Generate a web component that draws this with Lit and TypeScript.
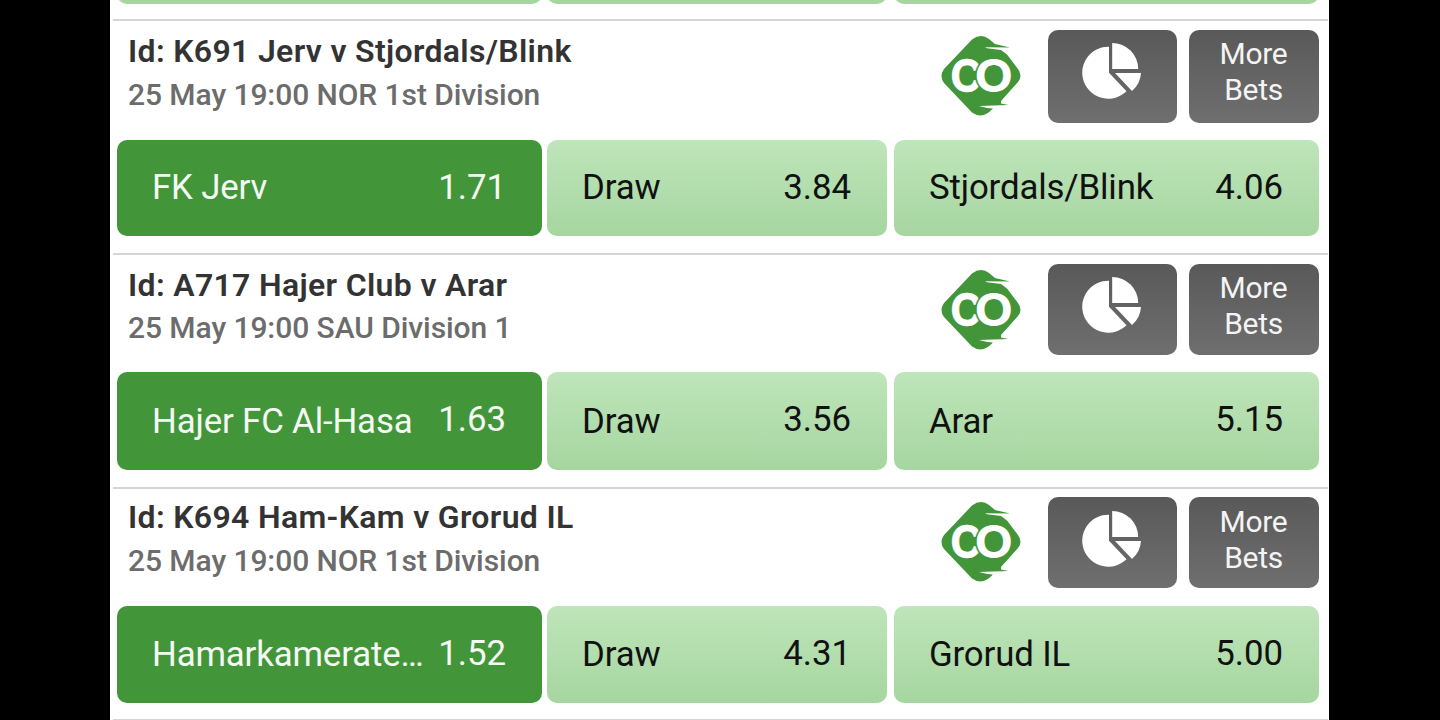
import { LitElement, html, css } from 'lit';
import { customElement, property } from 'lit/decorators.js';
import { classMap } from 'lit/directives/class-map.js';

interface Outcome {
  name: string;
  price: string;
  selected?: boolean;
}

interface Match {
  title: string;
  info: string;
  outcomes: Outcome[];
}

const MATCHES: Match[] = [
  {
    title: 'Id: K691 Jerv v Stjordals/Blink',
    info: '25 May 19:00 NOR 1st Division',
    outcomes: [
      { name: 'FK Jerv', price: '1.71', selected: true },
      { name: 'Draw', price: '3.84' },
      { name: 'Stjordals/Blink', price: '4.06' },
    ],
  },
  {
    title: 'Id: A717 Hajer Club v Arar',
    info: '25 May 19:00 SAU Division 1',
    outcomes: [
      { name: 'Hajer FC Al-Hasa', price: '1.63', selected: true },
      { name: 'Draw', price: '3.56' },
      { name: 'Arar', price: '5.15' },
    ],
  },
  {
    title: 'Id: K694 Ham-Kam v Grorud IL',
    info: '25 May 19:00 NOR 1st Division',
    outcomes: [
      { name: 'Hamarkamerate…', price: '1.52', selected: true },
      { name: 'Draw', price: '4.31' },
      { name: 'Grorud IL', price: '5.00' },
    ],
  },
];

@customElement('cash-out-badge')
export class CashOutBadge extends LitElement {
  static styles = css`
    :host {
      display: block;
      width: 80px;
      height: 80px;
    }

    svg {
      display: block;
    }

    .mark {
      font-family: Inter, sans-serif;
      font-size: 45px;
      font-weight: 700;
      fill: #fff;
      stroke: #fff;
      stroke-width: 0.6px;
    }

    .ring {
      stroke: #43953a;
      stroke-width: 3px;
      paint-order: stroke;
    }
  `;

  render() {
    return html`
      <svg width="80" height="80" viewBox="0 0 80 80">
        <path
          fill="#43953a"
          d="M31 3.5Q40-3 48 3L54 8L69 11.5L44 11.2L46 12.2L60 14L66 18.5L77 33Q82 40 77 46L60 65L60 67.5L67.5 69L38 70L46 72L52 72.6Q48 76.5 46 77.5Q39 82 31 76.5L3 47Q-2 40 3 33Z"
        />
        <text class="mark" x="9.2" y="56.4" textLength="32" lengthAdjust="spacingAndGlyphs">C</text>
        <text class="mark ring" x="33.5" y="56.4" textLength="38.5" lengthAdjust="spacingAndGlyphs">O</text>
      </svg>
    `;
  }
}

@customElement('match-row')
export class MatchRow extends LitElement {
  static styles = css`
    :host {
      display: block;
      box-sizing: border-box;
      height: var(--row-height);
      margin: 0 1px 0 3px;
      border-top: 2px solid #d5d5d5;
    }

    .header {
      display: flex;
      align-items: flex-start;
      height: var(--header-height);
      padding: 8.5px 9.5px 0 15px;
      box-sizing: border-box;
    }

    .text {
      flex: 1;
      margin-top: var(--text-top);
      white-space: nowrap;
    }

    .title {
      font-size: 32px;
      font-weight: 600;
      line-height: 44px;
      letter-spacing: 0.33px;
      color: #333;
    }

    .info {
      font-size: 30px;
      font-weight: 500;
      line-height: var(--info-line);
      letter-spacing: -0.07px;
      color: #6c6c6c;
    }

    cash-out-badge {
      margin: var(--badge-top) 27px 0 0;
    }

    .button {
      display: flex;
      align-items: flex-start;
      justify-content: center;
      box-sizing: border-box;
      width: 128.5px;
      height: var(--button-height);
      padding-top: 13.5px;
      border-radius: 10px;
      background: linear-gradient(#595959, #6f6f6f);
      color: #f4f4f4;
      font-size: 30px;
      line-height: 36px;
      text-align: center;
    }

    .button.more {
      width: 130px;
      margin-left: 12px;
      padding-top: var(--more-top);
      letter-spacing: -0.3px;
    }

    .outcomes {
      display: grid;
      grid-template-columns: 425px 340px 425px;
      column-gap: 5px;
      padding-left: 4px;
    }

    .outcome {
      display: flex;
      align-items: center;
      justify-content: space-between;
      height: var(--outcome-height);
      padding: 0 36px var(--name-lift) 35px;
      box-sizing: border-box;
      border-radius: 10px;
      background: linear-gradient(#bfe5ba, #a6d6a0);
      color: #111;
      font-size: 34.8px;
    }

    .outcome:last-child {
      margin-left: 2px;
      margin-right: -2px;
    }

    .outcome.selected {
      background: #43953a;
      color: #f4faf3;
    }

    .name {
      letter-spacing: -0.15px;
      white-space: nowrap;
    }

    .price {
      padding-bottom: var(--price-lift);
    }
  `;

  @property({ attribute: false }) match!: Match;

  render() {
    return html`
      <div class="header">
        <div class="text">
          <div class="title">${this.match.title}</div>
          <div class="info">${this.match.info}</div>
        </div>
        <cash-out-badge></cash-out-badge>
        <div class="button">
          <svg width="60" height="58" viewBox="0 0 60 58" fill="#fff">
            <path d="M27 3.7V29.7L44.5 48.2A26 26 0 1 1 27 3.7Z" />
            <path d="M30.2 0A26 26 0 0 1 56.2 26H30.2Z" />
            <path d="M33 30H59A26 26 0 0 1 50 48Z" />
          </svg>
        </div>
        <div class="button more">More<br />Bets</div>
      </div>
      <div class="outcomes">
        ${this.match.outcomes.map(
          (o) => html`
            <div class="outcome ${classMap({ selected: !!o.selected })}">
              <span class="name">${o.name}</span>
              <span class="price">${o.price}</span>
            </div>
          `
        )}
      </div>
    `;
  }
}

@customElement('app-root')
export class AppRoot extends LitElement {
  static styles = css`
    :host {
      display: flex;
      justify-content: center;
      height: 720px;
      overflow: hidden;
      background: #000;
      font-family: Roboto, sans-serif;
    }

    .panel {
      width: 1219px;
      height: 720px;
      margin-right: 1px;
      overflow: hidden;
      background: #fff;
    }

    /* bottom edge of the row scrolled off the top */
    .previous {
      display: grid;
      grid-template-columns: 425px 340px 425px;
      column-gap: 5px;
      height: 19px;
      padding-left: 7px;
    }

    .edge {
      height: 20px;
      margin-top: -16px;
      border-radius: 10px;
      background: #a6d6a0;
    }

    .edge:last-child {
      margin-left: 2px;
      margin-right: -2px;
    }

    match-row {
      --row-height: 233.6px;
      --header-height: 117px;
      --button-height: 91px;
      --outcome-height: 97.5px;
      --text-top: -1px;
      --info-line: 41px;
      --badge-top: 6px;
      --more-top: 6.5px;
      --name-lift: 0px;
      --price-lift: 4px;
    }

    .first {
      --row-height: 234px;
      --header-height: 118.5px;
      --button-height: 93px;
      --outcome-height: 96.5px;
      --info-line: 44px;
      --name-lift: 1px;
      --price-lift: 0px;
    }

    .last {
      --row-height: 232px;
      --header-height: 117px;
      --text-top: -2.5px;
      --info-line: 43px;
      --badge-top: 5px;
      --more-top: 7.4px;
      --price-lift: 3px;
    }

    .end {
      margin: 0 1px 0 3px;
      border-top: 2px solid #d5d5d5;
    }
  `;

  render() {
    return html`
      <div class="panel">
        <div class="previous">
          <div class="edge"></div>
          <div class="edge"></div>
          <div class="edge"></div>
        </div>
        ${MATCHES.map(
          (m, i) => html`
            <match-row
              class=${classMap({ first: i === 0, last: i === MATCHES.length - 1 })}
              .match=${m}
            ></match-row>
          `
        )}
        <div class="end"></div>
      </div>
    `;
  }
}
